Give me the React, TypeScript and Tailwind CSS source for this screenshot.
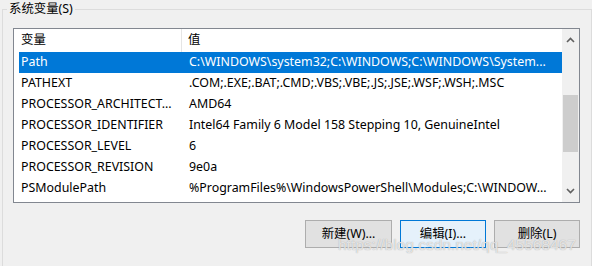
const rows = [
  { name: "Path", value: "C:\\WINDOWS\\system32;C:\\WINDOWS;C:\\WINDOWS\\System...", selected: true },
  { name: "PATHEXT", value: ".COM;.EXE;.BAT;.CMD;.VBS;.VBE;.JS;.JSE;.WSF;.WSH;.MSC" },
  { name: "PROCESSOR_ARCHITECT...", value: "AMD64" },
  { name: "PROCESSOR_IDENTIFIER", value: "Intel64 Family 6 Model 158 Stepping 10, GenuineIntel" },
  { name: "PROCESSOR_LEVEL", value: "6" },
  { name: "PROCESSOR_REVISION", value: "9e0a" },
  { name: "PSModulePath", value: "%ProgramFiles%\\WindowsPowerShell\\Modules;C:\\WINDOW..." },
];

const font = "font-['Noto_Sans','Noto_Sans_CJK_SC',sans-serif]";

export default function App() {
  return (
    <div className={`relative w-[592px] h-[266px] overflow-hidden bg-[#f0f0f0] text-[12.4px] text-black ${font}`}>
      <div className="ml-[2px] mt-[9px] w-[590px] h-[300px] border-l border-t border-r border-[#dcdcdc] pl-[10px] pt-[18px]">
        {/* list view */}
        <div className="flex w-[567px] h-[175px] border border-[#828790] bg-white">
          <div className="flex-1 pl-[5px]">
            <div className="flex h-[23px] items-center">
              <div className="w-[163px] h-full flex items-center pl-[2px] border-r border-[#e5e5e5]">变量</div>
              <div className="pl-[6px]">值</div>
            </div>
            {rows.map((r) => (
              <div
                key={r.name}
                className={`flex h-[21px] items-center whitespace-nowrap ${r.selected ? "bg-[#0078d7] text-white" : ""}`}
              >
                <div className="w-[163px] pl-[2px]">{r.name}</div>
                <div className="pl-[7px]">{r.value}</div>
              </div>
            ))}
          </div>
          {/* scrollbar */}
          <div className="w-[17px] flex flex-col bg-[#f0f0f0]">
            <div className="h-[22px] flex items-center justify-center">
              <svg width="9" height="6" viewBox="0 0 9 6">
                <path d="M1 5 L4.5 1.5 L8 5" fill="none" stroke="#606060" strokeWidth="1.6" />
              </svg>
            </div>
            <div className="h-[44px]" />
            <div className="mx-[1px] h-[57px] bg-[#cdcdcd]" />
            <div className="flex-1" />
            <div className="h-[22px] flex items-center justify-center">
              <svg width="9" height="6" viewBox="0 0 9 6">
                <path d="M1 1 L4.5 4.5 L8 1" fill="none" stroke="#606060" strokeWidth="1.6" />
              </svg>
            </div>
          </div>
        </div>

        {/* buttons */}
        <div className="mt-[17px] flex w-[567px] justify-end gap-[8px]">
          <button className="w-[87px] h-[28px] border border-[#adadad] bg-[#e1e1e1]">新建(W)...</button>
          <button className="w-[86px] h-[28px] border border-[#0078d7] bg-[#e5f1fb]">编辑(I)...</button>
          <button className="w-[86px] h-[28px] border border-[#adadad] bg-[#e1e1e1]">删除(L)</button>
        </div>
      </div>

      {/* group caption */}
      <div className="absolute left-[7px] top-0 bg-[#f0f0f0] px-[2px] leading-[18px]">系统变量(S)</div>

      {/* watermark */}
      <div className="absolute left-[338px] top-[235px] text-[15.5px] leading-[20px] font-['Liberation_Sans',sans-serif] text-white/70 [text-shadow:0_0_1px_#9a9a9a] pointer-events-none">
        https://blog.csdn.net/qq_45568467
      </div>
    </div>
  );
}
